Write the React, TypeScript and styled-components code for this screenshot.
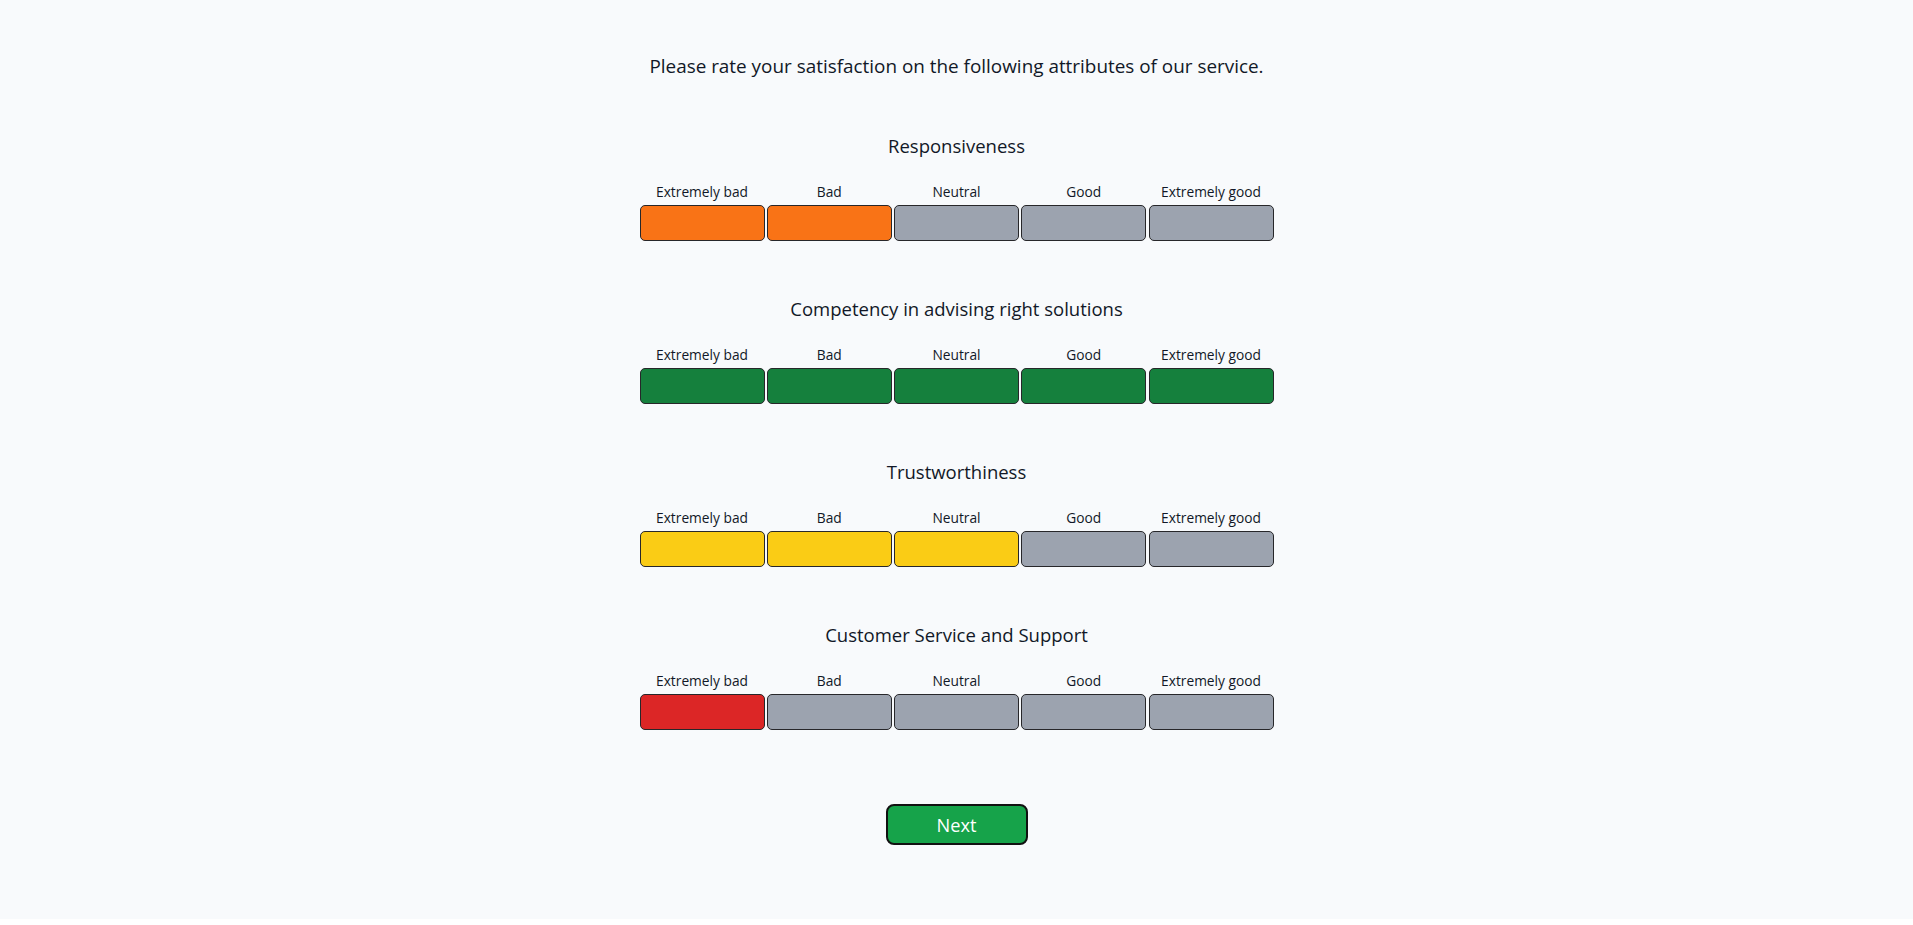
import React from "react";
import styled, { createGlobalStyle } from "styled-components";

const Global = createGlobalStyle`
  html, body { margin: 0; padding: 0; background: #ffffff; }
  body { font-family: "Open Sans", "Noto Sans", sans-serif; color: #111827; }
`;

const Page = styled.div`
  height: 919px;
  background: #f8fafc;
  display: flex;
  flex-direction: column;
  align-items: center;
  padding-top: 52px;
  box-sizing: border-box;
`;

const Intro = styled.p`
  margin: 0 0 52px;
  font-size: 18.9px;
  line-height: 28px;
  color: #111827;
`;

const Section = styled.section`
  display: flex;
  flex-direction: column;
  align-items: center;
  margin-bottom: 54px;
`;

const Title = styled.h2`
  margin: 0 0 23px;
  font-size: 18.5px;
  font-weight: 400;
  line-height: 28px;
  color: #111827;
`;

const Scale = styled.div`
  display: grid;
  grid-template-columns: repeat(5, 125px);
  column-gap: 2.25px;
  row-gap: 5px;
`;

const Label = styled.span`
  font-size: 13.75px;
  line-height: 17px;
  text-align: center;
  white-space: nowrap;
  color: #111827;
`;

const Choice = styled.button<{ $fill: string }>`
  height: 36px;
  padding: 0;
  border: 1px solid #27272a;
  border-radius: 5px;
  background: ${(p) => p.$fill};
  cursor: pointer;
`;

const NextButton = styled.button`
  margin-top: 20px;
  width: 142px;
  height: 41px;
  padding: 0;
  border: 2px solid #111111;
  border-radius: 8px;
  background: #16a34a;
  color: #ffffff;
  font-family: "Open Sans", "Noto Sans", sans-serif;
  font-size: 18.2px;
  cursor: pointer;
`;

const LABELS = ["Extremely bad", "Bad", "Neutral", "Good", "Extremely good"];
const GREY = "#9ca3af";

type Item = { title: string; color: string; count: number };
const ITEMS: Item[] = [
  { title: "Responsiveness", color: "#f97316", count: 2 },
  { title: "Competency in advising right solutions", color: "#15803d", count: 5 },
  { title: "Trustworthiness", color: "#facc15", count: 3 },
  { title: "Customer Service and Support", color: "#dc2626", count: 1 },
];

export default function App() {
  return (
    <>
      <Global />
      <Page>
        <Intro>Please rate your satisfaction on the following attributes of our service.</Intro>
        {ITEMS.map((it) => (
          <Section key={it.title}>
            <Title>{it.title}</Title>
            <Scale>
              {LABELS.map((l) => (
                <Label key={l}>{l}</Label>
              ))}
              {LABELS.map((l, i) => (
                <Choice key={l} $fill={i < it.count ? it.color : GREY} aria-label={l} />
              ))}
            </Scale>
          </Section>
        ))}
        <NextButton>Next</NextButton>
      </Page>
    </>
  );
}
